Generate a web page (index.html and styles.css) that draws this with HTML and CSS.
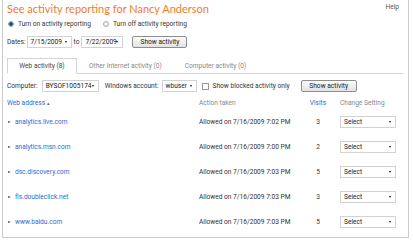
FILE: index.html
```html
<!DOCTYPE html>
<html lang="en">
<head>
    <meta charset="UTF-8">
    <title>Activity reporting</title>
    <link rel="stylesheet" href="styles.css">
</head>
<body>
    <div class="frame">
        <div class="top">
            <h1>See activity reporting for Nancy Anderson</h1>
            <a class="help" href="#">Help</a>
        </div>

        <div class="radios">
            <label class="radio checked"><span class="dot"></span>Turn on activity reporting</label>
            <label class="radio"><span class="dot"></span>Turn off activity reporting</label>
        </div>

        <div class="dates">
            <span>Dates:</span>
            <span class="dropdown date">7/15/2009</span>
            <span>to</span>
            <span class="dropdown date">7/22/2009</span>
            <button class="btn btn-dates">Show activity</button>
        </div>

        <div class="tabs">
            <span class="tab active">Web activity (8)</span>
            <span class="tab">Other Internet activity (0)</span>
            <span class="tab">Computer activity (0)</span>
        </div>

        <div class="filters">
            <span>Computer:</span>
            <span class="dropdown computer">BYSOF1005174</span>
            <span class="label-account">Windows account:</span>
            <span class="dropdown account">wbuser</span>
            <label class="check"><span class="box"></span>Show blocked activity only</label>
            <button class="btn btn-filter">Show activity</button>
        </div>

        <table class="activity">
            <thead>
                <tr>
                    <th class="col-site sortable">Web address <span class="sort">&#9652;</span></th>
                    <th class="col-action">Action taken</th>
                    <th class="col-visits sortable">Visits</th>
                    <th class="col-setting">Change Setting</th>
                </tr>
            </thead>
            <tbody>
                <tr>
                    <td class="col-site"><a href="#">analytics.live.com</a></td>
                    <td class="col-action">Allowed on 7/16/2009 7:02 PM</td>
                    <td class="col-visits">3</td>
                    <td class="col-setting"><span class="dropdown setting">Select</span></td>
                </tr>
                <tr>
                    <td class="col-site"><a href="#">analytics.msn.com</a></td>
                    <td class="col-action">Allowed on 7/16/2009 7:00 PM</td>
                    <td class="col-visits">2</td>
                    <td class="col-setting"><span class="dropdown setting">Select</span></td>
                </tr>
                <tr>
                    <td class="col-site"><a href="#">dsc.discovery.com</a></td>
                    <td class="col-action">Allowed on 7/16/2009 7:03 PM</td>
                    <td class="col-visits">5</td>
                    <td class="col-setting"><span class="dropdown setting">Select</span></td>
                </tr>
                <tr>
                    <td class="col-site"><a href="#">fls.doubleclick.net</a></td>
                    <td class="col-action">Allowed on 7/16/2009 7:03 PM</td>
                    <td class="col-visits">3</td>
                    <td class="col-setting"><span class="dropdown setting">Select</span></td>
                </tr>
                <tr>
                    <td class="col-site"><a href="#">www.baidu.com</a></td>
                    <td class="col-action">Allowed on 7/16/2009 7:03 PM</td>
                    <td class="col-visits">5</td>
                    <td class="col-setting"><span class="dropdown setting">Select</span></td>
                </tr>
            </tbody>
        </table>
    </div>
</body>
</html>
```

FILE: styles.css
```css
* {
    margin: 0;
    padding: 0;
    box-sizing: border-box;
}

body {
    background: white;
    font-family: Roboto, "Open Sans", sans-serif;
    font-size: 6.6px;
    color: #333;
}

.frame {
    margin-left: 2px;
    width: 407px;
    height: 238px;
    border: 1px solid #cbcbcb;
    border-top: none;
    padding: 0 4px;
}

.top {
    display: flex;
    justify-content: space-between;
    align-items: flex-start;
    height: 18px;
}

.top h1 {
    font-family: Lato, sans-serif;
    font-size: 11px;
    font-weight: normal;
    line-height: 18px;
    color: #f27b2f;
}

.help {
    margin-top: 3px;
    margin-right: 5px;
    color: #555;
    text-decoration: none;
}

.radios {
    display: flex;
    align-items: center;
    gap: 12px;
    height: 12px;
    padding-left: 1px;
}

.radio {
    display: flex;
    align-items: center;
    gap: 4px;
}

.radio .dot {
    width: 6px;
    height: 6px;
    border: 1px solid #aaa;
    border-radius: 50%;
    background: #f4f4f4;
}

.radio.checked .dot {
    background: radial-gradient(circle, #1d3f6e 0 1.5px, #dfe8f2 2px);
    border-color: #8aa0b8;
}

.dates,
.filters {
    display: flex;
    align-items: center;
    height: 12px;
    margin-top: 6px;
}

.dropdown {
    position: relative;
    display: flex;
    align-items: center;
    height: 12px;
    padding-left: 3px;
    border: 1px solid #d2d2d2;
    background: white;
    color: #222;
}

.dropdown::after {
    content: "";
    position: absolute;
    right: 4px;
    top: 4px;
    border-left: 1.5px solid transparent;
    border-right: 1.5px solid transparent;
    border-top: 2.5px solid #111;
}

.dropdown.date {
    width: 45px;
    margin: 0 2px 0 1px;
}

.dropdown.date + span + .dropdown.date {
    width: 42px;
    margin-left: 2px;
}

.btn {
    height: 12px;
    padding: 0 4px;
    border: 1px solid #8d8d8d;
    border-radius: 2px;
    background: linear-gradient(#fbfbfb, #e2e2e2);
    font-family: inherit;
    font-size: inherit;
    color: #222;
}

.btn-dates {
    width: 55px;
    margin-left: 7px;
}

.tabs {
    display: flex;
    align-items: flex-end;
    height: 16px;
    margin-top: 10px;
    margin-right: 1px;
    border-bottom: 1px solid #d4d4d4;
}

.tab {
    display: flex;
    align-items: center;
    justify-content: center;
    height: 15px;
    color: #888;
}

.tab.active {
    width: 70px;
    height: 16px;
    margin-bottom: -1px;
    border: 1px solid #d4d4d4;
    border-bottom-color: white;
    background: white;
    color: #444;
}

.tab:nth-child(2) {
    margin-left: 12px;
}

.tab:nth-child(3) {
    margin-left: 23px;
}

.filters {
    margin-top: 6px;
}

.dropdown.computer {
    width: 57px;
    margin-left: 4px;
}

.label-account {
    margin-left: 6px;
}

.dropdown.account {
    width: 35px;
    margin-left: 3px;
}

.check {
    display: flex;
    align-items: center;
    gap: 4px;
    margin-left: 5px;
}

.check .box {
    width: 7px;
    height: 7px;
    border: 1px solid #999;
    background: white;
}

.btn-filter {
    width: 56px;
    margin-left: 11px;
}

.activity {
    width: 396px;
    margin-top: 5px;
    border-collapse: collapse;
    table-layout: fixed;
}

.activity th,
.activity td {
    padding: 0;
    text-align: left;
    font-weight: normal;
    vertical-align: middle;
}

.activity th {
    height: 12px;
    color: #888;
}

.activity th.sortable {
    color: #2c6ad6;
}

.sort {
    font-size: 5px;
    color: #666;
}

.activity td {
    height: 25px;
    color: #333;
}

.col-site {
    width: 192px;
}

.col-action {
    width: 101px;
}

.col-visits {
    width: 36px;
}

td.col-visits,
th.col-visits {
    text-align: center;
}

.col-setting {
    padding-left: 4px !important;
}

.col-site a {
    display: inline-flex;
    align-items: center;
    color: #2c6ad6;
    text-decoration: none;
}

.col-site a::before {
    content: "";
    margin: 0 4px 0 1px;
    border-left: 3px solid #555;
    border-top: 1.5px solid transparent;
    border-bottom: 1.5px solid transparent;
}

.dropdown.setting {
    width: 56px;
    height: 12px;
}
```
